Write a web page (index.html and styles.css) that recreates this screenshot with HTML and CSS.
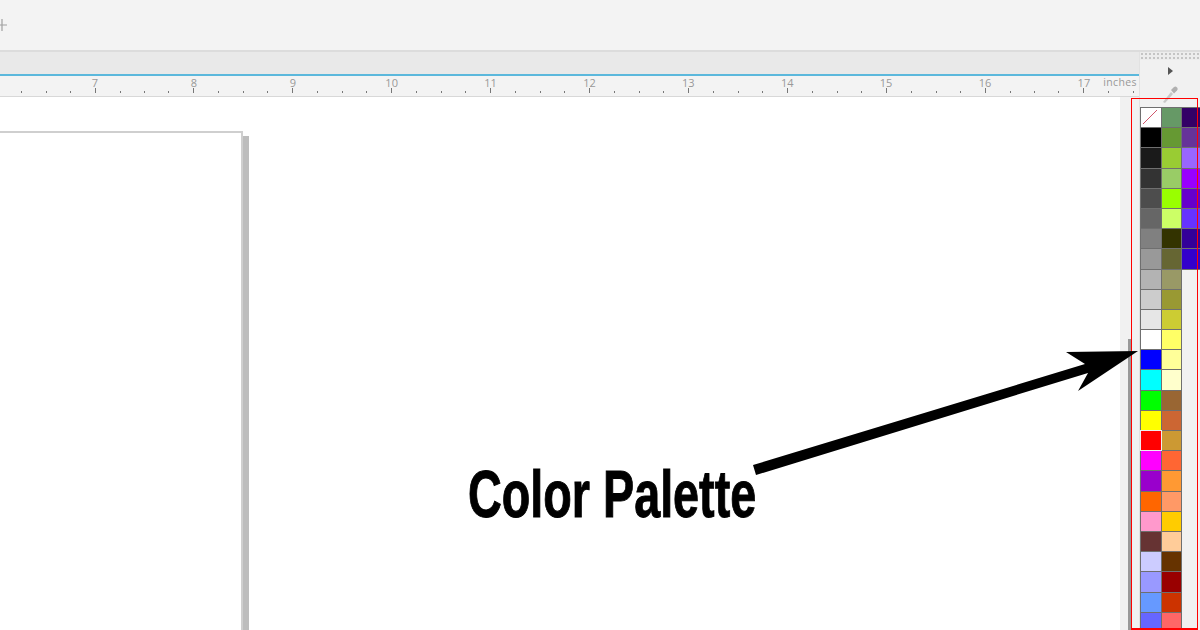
FILE: index.html
```html
<!DOCTYPE html>
<html lang="en">
<head>
  <meta charset="UTF-8">
  <title>Color Palette</title>
  <link rel="stylesheet" href="styles.css">
</head>
<body>
  <div class="toolbar">
    <svg class="add-tab" width="8" height="12" viewBox="0 0 8 12">
      <path d="M0 6 H7 M2 0 V12" stroke="#a0a0a0" stroke-width="1.200" fill="none"/>
    </svg>
  </div>

  <div class="workspace">
    <div class="document">
      <div class="tabs"></div>
      <div class="ruler">
        <div class="inch"></div>
        <div class="inch">7</div>
        <div class="inch">8</div>
        <div class="inch">9</div>
        <div class="inch">10</div>
        <div class="inch">11</div>
        <div class="inch">12</div>
        <div class="inch">13</div>
        <div class="inch">14</div>
        <div class="inch">15</div>
        <div class="inch">16</div>
        <div class="inch">17</div>
        <div class="inch"></div>
        <span class="units">inches</span>
      </div>
      <div class="canvas">
        <div class="paper"></div>
        <div class="side-strip">
          <div class="scroll-thumb"></div>
        </div>
      </div>
    </div>

    <div class="palette-dock">
      <div class="grip"></div>
      <div class="flyout"><span class="flyout-arrow"></span></div>
      <svg class="dropper" width="20" height="18" viewBox="0 0 20 18">
        <path d="M3 17 L11 7 L13 9 L5 18 Z" fill="#c8c8c8"/>
        <path d="M11 5 L14 2 Q15.500 1 16.500 2 L17.500 3 Q18 4.500 17 5.500 L14 8.500 Z" fill="#b0b0b0"/>
      </svg>
      <div class="swatches">
        <div class="swatch none"><svg width="18" height="18" viewBox="0 0 18 18"><line x1="2" y1="16" x2="16" y2="2" stroke="#d0566c" stroke-width="1"/></svg></div>
        <div class="swatch" style="background:#000"></div>
        <div class="swatch" style="background:#1a1a1a"></div>
        <div class="swatch" style="background:#333"></div>
        <div class="swatch" style="background:#4d4d4d"></div>
        <div class="swatch" style="background:#666"></div>
        <div class="swatch" style="background:#808080"></div>
        <div class="swatch" style="background:#999"></div>
        <div class="swatch" style="background:#b3b3b3"></div>
        <div class="swatch" style="background:#ccc"></div>
        <div class="swatch" style="background:#e6e6e6"></div>
        <div class="swatch" style="background:#fff"></div>
        <div class="swatch" style="background:#00f"></div>
        <div class="swatch" style="background:#0ff"></div>
        <div class="swatch" style="background:#0f0"></div>
        <div class="swatch" style="background:#ff0"></div>
        <div class="swatch selected" style="background:#f00"></div>
        <div class="swatch" style="background:#f0f"></div>
        <div class="swatch" style="background:#90c"></div>
        <div class="swatch" style="background:#f60"></div>
        <div class="swatch" style="background:#f9c"></div>
        <div class="swatch" style="background:#633"></div>
        <div class="swatch" style="background:#ccf"></div>
        <div class="swatch" style="background:#99f"></div>
        <div class="swatch" style="background:#69f"></div>
        <div class="swatch" style="background:#66f"></div>

        <div class="swatch" style="background:#696"></div>
        <div class="swatch" style="background:#693"></div>
        <div class="swatch" style="background:#9c3"></div>
        <div class="swatch" style="background:#9c6"></div>
        <div class="swatch" style="background:#9f0"></div>
        <div class="swatch" style="background:#cf6"></div>
        <div class="swatch" style="background:#330"></div>
        <div class="swatch" style="background:#663"></div>
        <div class="swatch" style="background:#996"></div>
        <div class="swatch" style="background:#993"></div>
        <div class="swatch" style="background:#cc3"></div>
        <div class="swatch" style="background:#ff6"></div>
        <div class="swatch" style="background:#ff9"></div>
        <div class="swatch" style="background:#ffc"></div>
        <div class="swatch" style="background:#963"></div>
        <div class="swatch" style="background:#c63"></div>
        <div class="swatch" style="background:#c93"></div>
        <div class="swatch" style="background:#f63"></div>
        <div class="swatch" style="background:#f93"></div>
        <div class="swatch" style="background:#f96"></div>
        <div class="swatch" style="background:#fc0"></div>
        <div class="swatch" style="background:#fc9"></div>
        <div class="swatch" style="background:#630"></div>
        <div class="swatch" style="background:#900"></div>
        <div class="swatch" style="background:#c30"></div>
        <div class="swatch" style="background:#f66"></div>

        <div class="swatch" style="background:#306"></div>
        <div class="swatch" style="background:#639"></div>
        <div class="swatch" style="background:#96f"></div>
        <div class="swatch" style="background:#90f"></div>
        <div class="swatch" style="background:#60c"></div>
        <div class="swatch" style="background:#63f"></div>
        <div class="swatch" style="background:#309"></div>
        <div class="swatch" style="background:#30c"></div>
      </div>
    </div>
  </div>

  <!-- annotation drawn on top of the screenshot -->
  <div class="highlight"></div>
  <svg class="arrow" width="1200" height="630" viewBox="0 0 1200 630">
    <polygon points="753,465 1085,364 1066,352 1138,351 1078,391 1088,373 756,475" fill="#000"/>
  </svg>
  <div class="callout">Color Palette</div>
</body>
</html>
```

FILE: styles.css
```css
/* Basic styles */
html, body {
  height: 100%;
}
body {
  margin: 0;
  width: 1200px;
  height: 630px;
  overflow: hidden;
  position: relative;
  display: flex;
  flex-direction: column;
  background-color: #fff;
  font-family: "Open Sans", "Liberation Sans", sans-serif;
}

.toolbar {
  height: 50px;
  flex-shrink: 0;
  background-color: #f3f3f3;
  border-bottom: 2px solid #dcdcdc;
}
.add-tab {
  display: block;
  margin-top: 19px;
}

.workspace {
  flex: 1;
  display: flex;
  min-height: 0;
}
.document {
  flex: 1;
  min-width: 0;
  display: flex;
  flex-direction: column;
}
.tabs {
  height: 22px;
  background-color: #e9e9e9;
  border-bottom: 2px solid #5bb8dc;
}

.ruler {
  position: relative;
  height: 20px;
  display: flex;
  overflow: hidden;
  background-color: #f3f3f3;
  border-bottom: 1px solid #d8d8d8;
}
/* each segment is centred on its inch mark */
.inch {
  flex: 0 0 98.9px;
  height: 20px;
  text-align: center;
  font-size: 11px;
  line-height: 11px;
  padding-top: 1px;
  box-sizing: border-box;
  color: #999;
  background-image:
    linear-gradient(#777, #777),
    linear-gradient(#777, #777),
    linear-gradient(#777, #777),
    linear-gradient(#777, #777);
  background-repeat: no-repeat;
  background-size: 1px 5px, 1px 2px, 1px 2px, 1px 2px;
  background-position: 49px 12px, 24px 15px, 74px 15px, 0 15px;
}
.inch:first-child {
  margin-left: -53.35px;
}
.units {
  position: absolute;
  right: 2px;
  top: 0;
  font-size: 10.5px;
  line-height: 13px;
  letter-spacing: 0.4px;
  color: #999;
  background-color: #f3f3f3;
}

.canvas {
  flex: 1;
  display: flex;
  justify-content: space-between;
  padding-top: 34px;
  background-color: #fff;
}
.paper {
  width: 241px;
  border: 2px solid #cfcfcf;
  border-left: none;
  border-bottom: none;
  box-shadow: 6px 5px 0 #bdbdbd;
  margin-bottom: -20px;
}
.side-strip {
  width: 19px;
  margin-top: -34px;
  background-color: #f1f1f1;
  display: flex;
  justify-content: flex-start;
  align-items: flex-end;
  padding-left: 8px;
  box-sizing: border-box;
}
.scroll-thumb {
  width: 3px;
  height: 291px;
  background-color: #999;
}

.palette-dock {
  width: 61px;
  flex-shrink: 0;
  background-color: #f1f1f1;
  border-left: 1px solid #e2e2e2;
  box-sizing: border-box;
  display: flex;
  flex-direction: column;
  overflow: hidden;
}
.palette-dock > * {
  flex-shrink: 0;
}
.grip {
  height: 8px;
  background-color: #ececec;
  background-image: radial-gradient(#c4c4c4 1px, transparent 1px);
  background-size: 4px 4px;
}
.flyout {
  height: 22px;
  display: flex;
  justify-content: center;
  align-items: center;
}
.flyout-arrow {
  width: 0;
  height: 0;
  border-left: 5px solid #555;
  border-top: 4.500px solid transparent;
  border-bottom: 4.500px solid transparent;
}
.dropper {
  display: block;
  margin: 3px 0 0 20px;
}
.swatches {
  display: grid;
  grid-auto-flow: column;
  grid-template-rows: repeat(26, 20.2px);
  grid-template-columns: repeat(3, 20.5px);
  margin-top: 4px;
}
.swatch {
  box-sizing: border-box;
  border: 1px solid #6f6f6f;
  margin: 0 -1px -1px 0;
}
.swatch.none {
  background-color: #fff;
}
.swatch.none svg {
  display: block;
}
.swatch.selected {
  border-color: #eee;
  z-index: 1;
}

.highlight {
  position: absolute;
  left: 1131px;
  top: 98px;
  width: 67px;
  height: 532px;
  box-sizing: border-box;
  border: 1px solid #f00;
  border-bottom-width: 2px;
  z-index: 2;
}
.arrow {
  position: absolute;
  left: 0;
  top: 0;
  z-index: 3;
}
.callout {
  position: absolute;
  left: 468px;
  top: 454px;
  font-family: "Liberation Sans", sans-serif;
  font-weight: 700;
  font-size: 66px;
  line-height: 80px;
  color: #000;
  white-space: nowrap;
  transform: scaleX(0.708);
  transform-origin: left center;
  -webkit-text-stroke: 1px #000;
}
```
